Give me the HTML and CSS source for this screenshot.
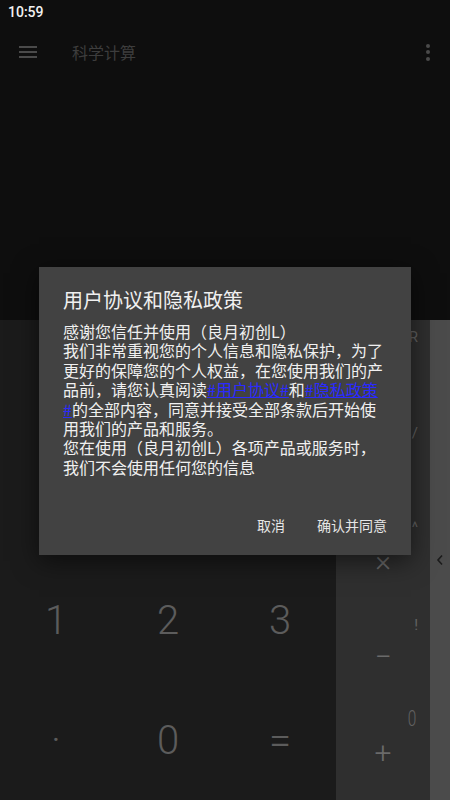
FILE: index.html
```html
<!DOCTYPE html>
<html lang="zh-CN">
<head>
    <meta charset="UTF-8">
    <meta name="viewport" content="width=device-width, initial-scale=1.0">
    <title>科学计算</title>
    <link rel="stylesheet" href="styles.css">
</head>
<body>
    <div class="screen">
        <div class="status-bar">10:59</div>

        <div class="toolbar">
            <div class="menu-icon"><span></span><span></span><span></span></div>
            <div class="toolbar-title">科学计算</div>
            <div class="more-icon"><span></span><span></span><span></span></div>
        </div>

        <div class="display"></div>

        <div class="keypad">
            <div class="digits">
                <div class="key">7</div>
                <div class="key">8</div>
                <div class="key">9</div>
                <div class="key">4</div>
                <div class="key">5</div>
                <div class="key">6</div>
                <div class="key">1</div>
                <div class="key">2</div>
                <div class="key">3</div>
                <div class="key">·</div>
                <div class="key">0</div>
                <div class="key">=</div>
            </div>
            <div class="ops">
                <div class="op">DEL<span class="alt">R</span></div>
                <div class="op">÷<span class="alt">/</span></div>
                <div class="op">×<span class="alt alt-caret">^</span></div>
                <div class="op">−<span class="alt">!</span></div>
                <div class="op">+<span class="alt alt-zero">0</span></div>
            </div>
            <div class="drawer">
                <svg width="8" height="12" viewBox="0 0 8 12">
                    <path d="M6 1.5 L2 6 L6 10.5" fill="none" stroke="#1c1c1c" stroke-width="1.6"/>
                </svg>
            </div>
        </div>

        <!-- dialogue de premier lancement -->
        <div class="dialog">
            <div class="dialog-title">用户协议和隐私政策</div>
            <div class="dialog-body">
                感谢您信任并使用（良月初创L）<br>
                我们非常重视您的个人信息和隐私保护，为了更好的保障您的个人权益，在您使用我们的产品前，请您认真阅读<a href="#">#用户协议#</a>和<a href="#">#隐私政策#</a>的全部内容，同意并接受全部条款后开始使用我们的产品和服务。<br>
                您在使用（良月初创L）各项产品或服务时，我们不会使用任何您的信息
            </div>
            <div class="dialog-actions">
                <button class="dialog-button">取消</button>
                <button class="dialog-button">确认并同意</button>
            </div>
        </div>
    </div>
</body>
</html>
```

FILE: styles.css
```css
body {
    margin: 0;
    background-color: #0e0e0e;
    font-family: "Noto Sans CJK SC", "Noto Sans", sans-serif;
}

.screen {
    position: relative;
    width: 450px;
    height: 800px;
    overflow: hidden;
    display: flex;
    flex-direction: column;
    background-color: #0e0e0e;
}

.status-bar {
    height: 28px;
    padding-left: 8px;
    line-height: 25px;
    color: #f2f2f2;
    font-family: Roboto, sans-serif;
    font-size: 14px;
    font-weight: 500;
}

.toolbar {
    height: 48px;
    display: flex;
    align-items: center;
}

.menu-icon {
    width: 18px;
    margin-left: 19px;
    display: flex;
    flex-direction: column;
    gap: 3px;
}

.menu-icon span {
    height: 2px;
    background-color: #4a4a4a;
}

.toolbar-title {
    margin-left: 35px;
    flex: 1;
    color: #3d3d3d;
    font-size: 16px;
}

.more-icon {
    width: 4px;
    margin-right: 20px;
    display: flex;
    flex-direction: column;
    gap: 2.5px;
}

.more-icon span {
    width: 4px;
    height: 4px;
    border-radius: 50%;
    background-color: #4a4a4a;
}

.display {
    flex: 1;
}

.keypad {
    height: 480px;
    display: flex;
}

.digits {
    width: 336px;
    display: grid;
    grid-template-columns: repeat(3, 1fr);
    grid-template-rows: repeat(4, 1fr);
    background-color: #1b1b1b;
}

.key {
    display: flex;
    align-items: center;
    justify-content: center;
    color: #5c5c5c;
    font-family: Roboto, sans-serif;
    font-size: 40px;
    font-weight: 300;
}

.ops {
    width: 94px;
    display: flex;
    flex-direction: column;
    background-color: #2f2f2f;
}

.op {
    position: relative;
    flex: 1;
    display: flex;
    align-items: center;
    justify-content: center;
    color: #6a6a6a;
    font-family: Roboto, sans-serif;
    font-size: 30px;
    font-weight: 300;
}

.alt {
    position: absolute;
    right: 12px;
    top: 8px;
    color: #626262;
    font-size: 15px;
    font-weight: 400;
}

.alt-caret {
    top: 6px;
}

.alt-zero {
    top: 2px;
    font-size: 22px;
    font-weight: 300;
    transform: scaleX(0.7);
}

.drawer {
    flex: 1;
    display: flex;
    align-items: center;
    justify-content: center;
    background-color: #4b4b4b;
}

.dialog {
    position: absolute;
    left: 39px;
    top: 267px;
    width: 372px;
    height: 288px;
    box-sizing: border-box;
    padding: 20px 27px 0 24px;
    display: flex;
    flex-direction: column;
    background-color: #424242;
    box-shadow: 0 6px 24px rgba(0, 0, 0, 0.55);
}

.dialog-title {
    color: #f0f0f0;
    font-size: 20px;
    line-height: 26px;
}

.dialog-body {
    margin-top: 9px;
    color: #f0f0f0;
    font-size: 16px;
    line-height: 19.4px;
}

.dialog-body a {
    color: #2a2aff;
}

.dialog-actions {
    margin-top: auto;
    margin-right: -19px;
    margin-bottom: 12px;
    display: flex;
    justify-content: flex-end;
}

.dialog-button {
    height: 36px;
    padding: 0 16px;
    border: none;
    background: none;
    color: #e6e6e6;
    font-family: "Noto Sans CJK SC", sans-serif;
    font-size: 14px;
}
```
